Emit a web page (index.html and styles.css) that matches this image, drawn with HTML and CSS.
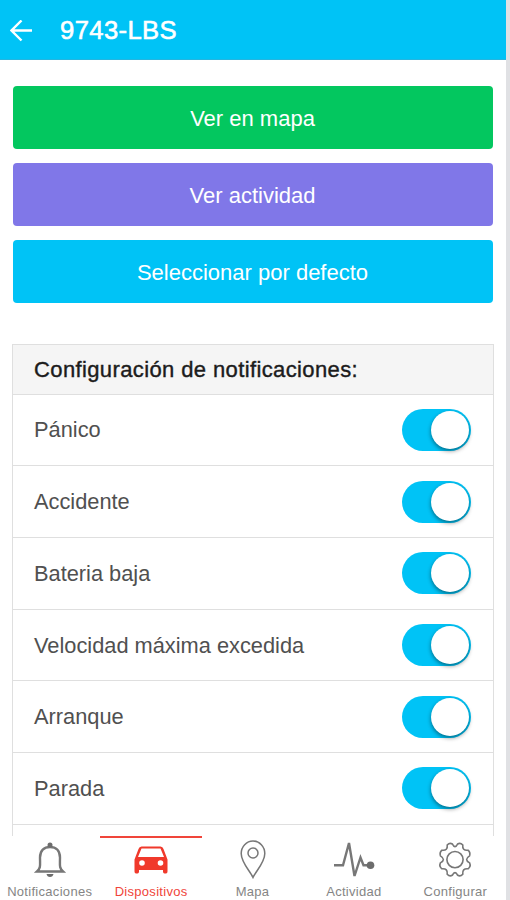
FILE: index.html
```html
<!DOCTYPE html>
<html lang="es">
<head>
    <meta charset="UTF-8">
    <meta name="viewport" content="width=device-width, initial-scale=1.0">
    <title>9743-LBS</title>
    <link rel="stylesheet" href="styles.css">
</head>
<body>
    <div class="app">
        <header class="header">
            <svg class="back" viewBox="0 0 22 22" width="22" height="22">
                <path d="M22 10.500H2M11.500 0.500L1.500 10.500L11.500 20.500"/>
            </svg>
            <h1>9743-LBS</h1>
        </header>

        <main class="content">
            <div class="buttons">
                <button class="btn green">Ver en mapa</button>
                <button class="btn purple">Ver actividad</button>
                <button class="btn blue">Seleccionar por defecto</button>
            </div>

            <section class="panel">
                <h2>Configuración de notificaciones:</h2>
                <div class="row"><span>Pánico</span><span class="switch"></span></div>
                <div class="row"><span>Accidente</span><span class="switch"></span></div>
                <div class="row"><span>Bateria baja</span><span class="switch"></span></div>
                <div class="row"><span>Velocidad máxima excedida</span><span class="switch"></span></div>
                <div class="row"><span>Arranque</span><span class="switch"></span></div>
                <div class="row"><span>Parada</span><span class="switch"></span></div>
                <div class="row"></div>
            </section>
        </main>

        <nav class="tabs">
            <a class="tab">
                <svg viewBox="0 0 40 40" width="40" height="40">
                    <path class="line thick" d="M7 33.500C11 30 10 27 10 19.500C10 12.500 14 9 20 9S30 12.500 30 19.500C30 27 29 30 33 33.500Z"/>
                    <circle class="fill" cx="20" cy="7" r="2.500"/>
                    <path class="fill" d="M16.500 36H23.500C23 38 22 39 20 39S17 38 16.500 36Z"/>
                </svg>
                <span>Notificaciones</span>
            </a>
            <a class="tab active">
                <svg viewBox="0 0 40 40" width="40" height="40">
                    <path class="fill" fill-rule="evenodd" d="M10.500 8.500H29.500Q31.800 8.500 32.500 11L36.500 21.500V33.500Q36.500 35.500 35 35.500H33.500Q32 35.500 32 33.500V32H8V33.500Q8 35.500 6.500 35.500H5Q3.500 35.500 3.500 33.500V21.500L7.500 11Q8.200 8.500 10.500 8.500ZM10.500 10.500L7 19H33L29.500 10.500ZM11 22.200A2.800 2.800 0 1 0 11 27.800A2.800 2.800 0 1 0 11 22.200ZM29.500 22.200A2.800 2.800 0 1 0 29.500 27.800A2.800 2.800 0 1 0 29.500 22.200Z"/>
                </svg>
                <span>Dispositivos</span>
            </a>
            <a class="tab">
                <svg viewBox="0 0 40 40" width="40" height="40">
                    <path class="line" d="M20 39.500C17 33 8.200 24.500 8.200 15.500A11.800 12.500 0 0 1 31.800 15.500C31.800 24.500 23 33 20 39.500Z"/>
                    <circle class="line" cx="20" cy="15" r="5"/>
                </svg>
                <span>Mapa</span>
            </a>
            <a class="tab">
                <svg viewBox="0 0 40 40" width="40" height="40">
                    <path class="line thick" d="M0 27.200H9L15 5L20.500 38L26.500 19.500L29.500 27.200H37"/>
                    <circle class="fill" cx="36.500" cy="27.200" r="3.800"/>
                </svg>
                <span>Actividad</span>
            </a>
            <a class="tab">
                <svg viewBox="1.500 1.500 37 37" width="40" height="40">
                    <path class="line" d="M17.500 7Q20 12 22.500 7Q25 5.500 27.200 8Q26.500 13.500 32 12.800Q34.500 14.500 33.500 18Q28 21.500 33.500 24.500Q35 28 32 30Q26.500 29.500 27.200 35Q25 37.500 22.500 36Q20 31 17.500 36Q15 37.500 12.800 35Q13.500 29.500 8 30Q5 28 6.500 24.500Q12 21.500 6.500 18Q5.500 14.500 8 12.800Q13.500 13.500 12.800 8Q15 5.500 17.500 7Z"/>
                    <circle class="line" cx="20" cy="21.500" r="7.500"/>
                </svg>
                <span>Configurar</span>
            </a>
        </nav>
    </div>
</body>
</html>
```
FILE: styles.css
```css
* {
    box-sizing: border-box;
}
body {
    margin: 0;
    height: 900px;
    overflow: hidden;
    background-color: #e0e1e4;
    font-family: "Liberation Sans", Arial, sans-serif;
}
.app {
    display: flex;
    flex-direction: column;
    width: 506px;
    height: 900px;
    background-color: #fff;
}
.header {
    display: flex;
    align-items: center;
    flex: none;
    height: 60px;
    padding: 2px 10px 0;
    background-color: #00c3f6;
    border-bottom: 1px solid #26b5df;
    color: #fff;
}
.back {
    margin-right: 28px;
    fill: none;
    stroke: #fff;
    stroke-width: 2.4;
}
h1 {
    margin: 0;
    font-size: 25.6px;
    font-weight: normal;
    letter-spacing: 0.4px;
    -webkit-text-stroke: 0.6px #fff;
}
.content {
    flex: 1;
    min-height: 0;
    overflow: hidden;
    padding: 25.6px 12px 0 11.5px;
}
.buttons {
    display: flex;
    flex-direction: column;
    gap: 14px;
    padding: 0 1px;
    width: 482px;
}
.btn {
    height: 63px;
    padding: 3px 0 0;
    border: none;
    border-radius: 4px;
    color: #fff;
    font-family: inherit;
    font-size: 22px;
}
.green {
    background-color: #03c75f;
}
.purple {
    background-color: #8077e8;
}
.blue {
    background-color: #00c3f6;
}
.panel {
    width: 482.5px;
    margin-top: 41px;
    border: 1px solid #dfdfdf;
}
h2 {
    margin: 0;
    height: 50px;
    padding-left: 21.5px;
    background-color: #f5f5f5;
    border-bottom: 1px solid #dfdfdf;
    color: #1c1c1c;
    font-size: 22px;
    font-weight: normal;
    letter-spacing: 0.38px;
    line-height: 50px;
    -webkit-text-stroke: 0.4px #1c1c1c;
}
.row {
    display: flex;
    align-items: center;
    justify-content: space-between;
    height: 71.7px;
    padding: 0 22px 0 21.5px;
    border-bottom: 1px solid #dfdfdf;
    color: #505050;
    font-size: 21.8px;
}
.row span:first-child {
    padding-top: 1px;
}
.switch {
    display: flex;
    justify-content: flex-end;
    width: 69px;
    height: 42px;
    padding: 2px;
    border-radius: 21px;
    background-color: #00c3f6;
}
.switch::after {
    content: "";
    width: 38px;
    height: 38px;
    border-radius: 50%;
    background-color: #fff;
    box-shadow: 0 2px 4px rgba(0, 0, 0, 0.45);
}
.tabs {
    display: flex;
    flex: none;
    height: 64.5px;
    margin-left: -1px;
}
.tab {
    display: flex;
    flex: 1;
    flex-direction: column;
    align-items: center;
    border-top: 2px solid transparent;
    color: #858585;
    font-size: 13px;
    letter-spacing: 0.3px;
    white-space: nowrap;
}
.tab svg {
    overflow: visible;
    width: 40px;
    height: 40px;
    margin: 0.5px 0 5.5px;
}
.active {
    border-top-color: #f0453a;
    color: #f0453a;
}
.line {
    fill: none;
    stroke: #777;
    stroke-width: 1.5;
}
.thick {
    stroke-width: 2.4;
}
.fill {
    fill: #6c6c6c;
}
.active .fill {
    fill: #f0392b;
}
```
